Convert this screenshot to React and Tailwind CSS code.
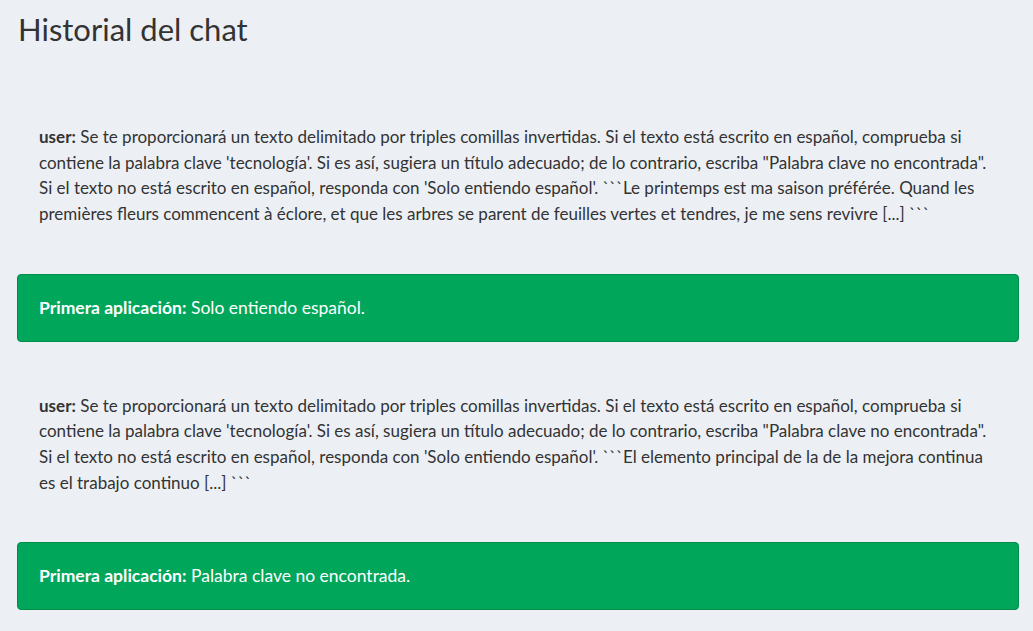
const MESSAGES = [
    {
        role: 'user',
        text: "Se te proporcionará un texto delimitado por triples comillas invertidas. Si el texto está escrito en español, comprueba si contiene la palabra clave 'tecnología'. Si es así, sugiera un título adecuado; de lo contrario, escriba \"Palabra clave no encontrada\". Si el texto no está escrito en español, responda con 'Solo entiendo español'. ```Le printemps est ma saison préférée. Quand les premières fleurs commencent à éclore, et que les arbres se parent de feuilles vertes et tendres, je me sens revivre [...] ```",
    },
    { role: 'app', text: 'Solo entiendo español.' },
    {
        role: 'user',
        text: "Se te proporcionará un texto delimitado por triples comillas invertidas. Si el texto está escrito en español, comprueba si contiene la palabra clave 'tecnología'. Si es así, sugiera un título adecuado; de lo contrario, escriba \"Palabra clave no encontrada\". Si el texto no está escrito en español, responda con 'Solo entiendo español'. ```El elemento principal de la de la mejora continua es el trabajo continuo [...] ```",
    },
    { role: 'app', text: 'Palabra clave no encontrada.' },
];

export default function App() {
    return (
        <div className="min-h-screen bg-[#ecf0f5] pl-[17px] pr-[14px] pb-6 text-[#333] font-['Lato',sans-serif]">
            <h1 className="pt-[13px] pl-px text-[31px] leading-[33px] font-normal">Historial del chat</h1>

            <div className="mt-[57px] flex flex-col">
                {MESSAGES.map((m, i) =>
                    m.role === 'user' ? (
                        <div key={i} className="px-[22px] py-[21px] mb-[26px] text-[17px] leading-[25.7px]">
                            <b className="font-bold">user:</b> {m.text}
                        </div>
                    ) : (
                        <div key={i} className="mb-[30px] rounded border border-[#008d4c] bg-[#00a65a] px-[21px] py-[20px] text-[17.5px] leading-[25.7px] text-white">
                            <b className="font-bold">Primera aplicación:</b> {m.text}
                        </div>
                    )
                )}
            </div>
        </div>
    );
}
